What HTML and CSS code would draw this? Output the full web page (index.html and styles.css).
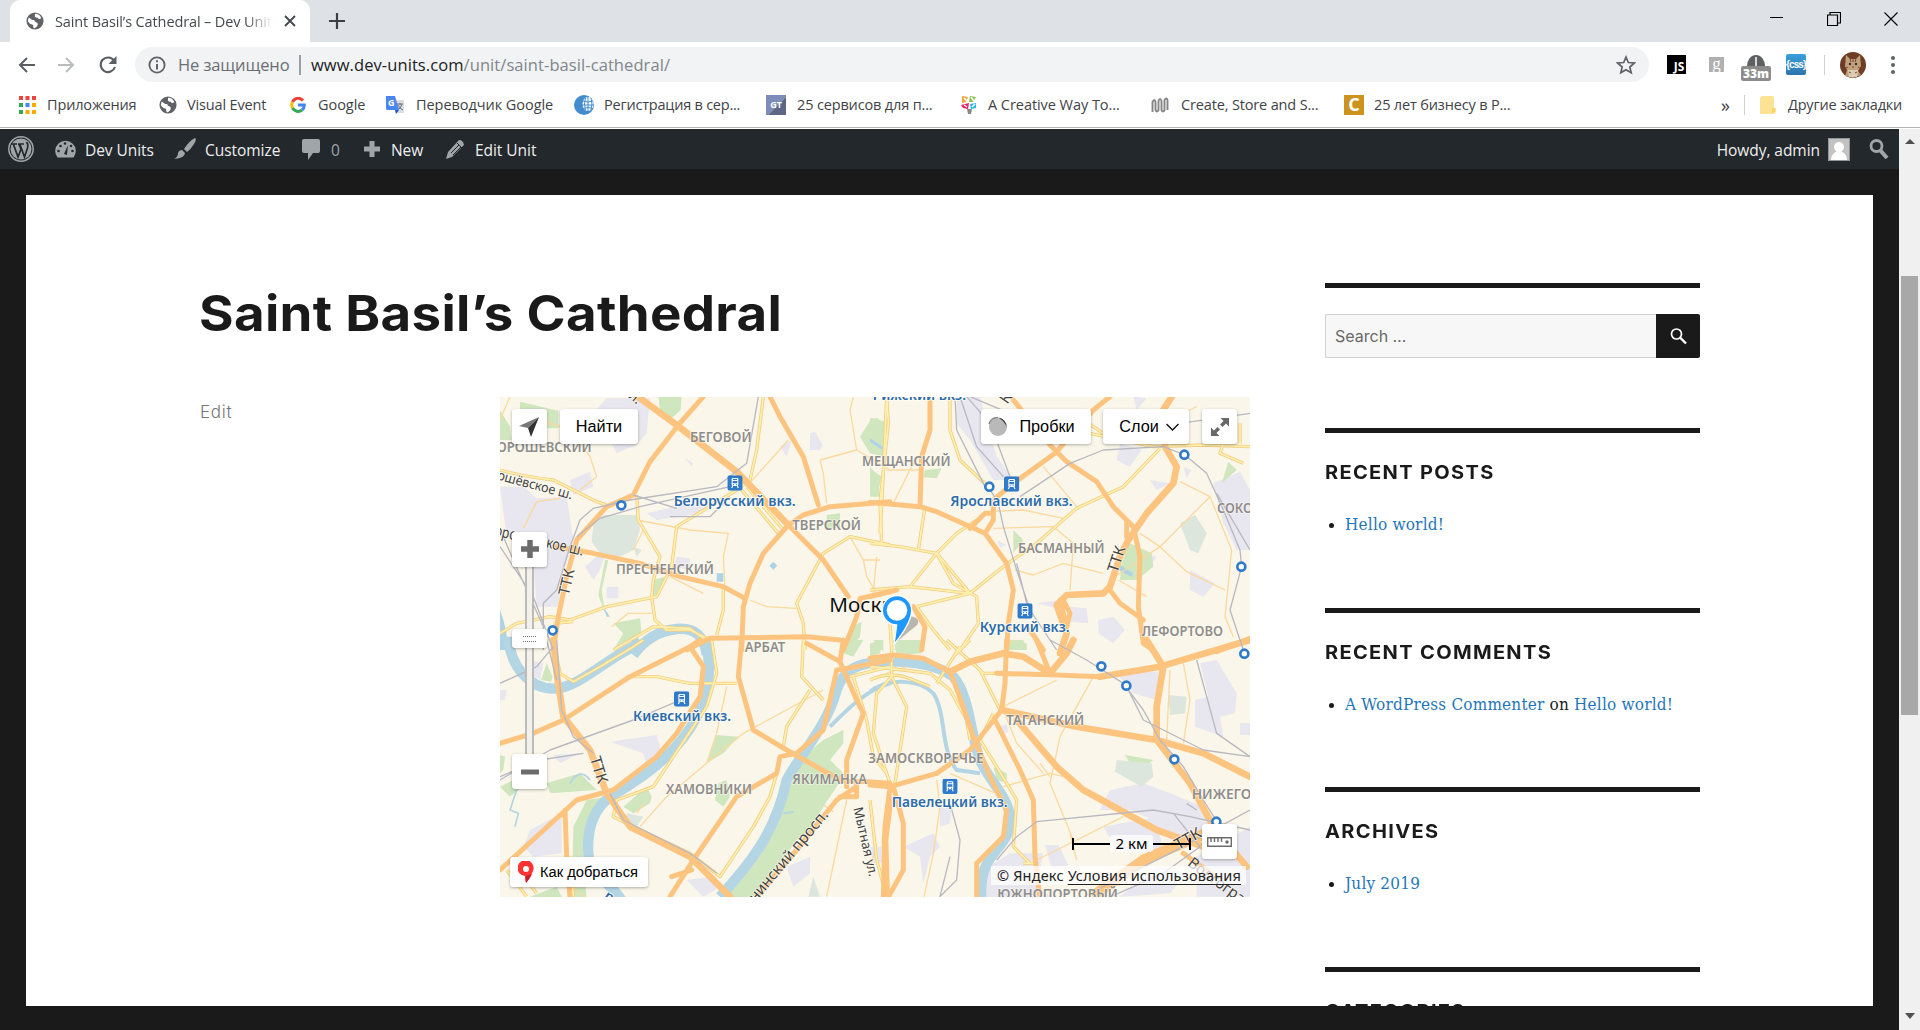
FILE: index.html
```html
<!DOCTYPE html>
<html lang="ru">
<head>
<meta charset="utf-8">
<title>Saint Basil’s Cathedral – Dev Units</title>
<link rel="stylesheet" href="styles.css">
</head>
<body>
<svg class="defs" width="0" height="0">
  <symbol id="globe" viewBox="0 0 20 20"><circle cx="10" cy="10" r="9.5" fill="#5f6368"/><path d="M3 6c2 1 3 3 6 3 1 1 0 2 2 2 2 1 3 3 1 5-1 1-2 2-3 2-2-1 0-3-2-4-2 0-4-2-5-4zM10 2c4 0 6 2 7 5-2 2-4 0-4-1-2 1-4-1-3-2z" fill="#fff"/></symbol>
  <symbol id="station" viewBox="0 0 46 46"><rect width="46" height="46" rx="7" fill="#2f7bc9"/><path d="M13 12q0-4 4-4h12q4 0 4 4v17q0 3-3 3H16q-3 0-3-3z" fill="#fff"/><path d="M17 11h12v3H17zM16 17h14v7H16zM17 27h3v3h-3zM26 27h3v3h-3z" fill="#2f7bc9"/><path d="M16 32l-3 6M30 32l3 6" stroke="#fff" stroke-width="3.500"/></symbol>
  <symbol id="stop" viewBox="0 0 34 34"><circle cx="17" cy="17" r="12" fill="#fff" stroke="#2f7bc9" stroke-width="8"/></symbol>
</svg>

<header class="browser">
  <div class="tabs">
    <div class="tab">
      <svg width="18" height="18"><use href="#globe"/></svg>
      <span class="tab-title">Saint Basil’s Cathedral – Dev Units</span>
      <svg width="12" height="12" viewBox="0 0 12 12"><path d="M1 1l10 10M11 1L1 11" stroke="#45494d" stroke-width="1.9"/></svg>
    </div>
    <svg class="new-tab" width="16" height="16" viewBox="0 0 16 16"><path d="M8 0v16M0 8h16" stroke="#3c4043" stroke-width="2.2"/></svg>
    <div class="window-buttons">
      <svg width="14" height="14" viewBox="0 0 14 14"><path d="M0 5.5h13" stroke="#000"/></svg>
      <svg width="14" height="14" viewBox="0 0 14 14"><path d="M.5 3h10v10.500H.5zM3 3V.5h10.500V11h-3" fill="none" stroke="#000" stroke-width="1.200"/></svg>
      <svg width="14" height="14" viewBox="0 0 14 14"><path d="M.5.5l13 13M13.500.5l-13 13" stroke="#000" stroke-width="1.100"/></svg>
    </div>
  </div>

  <div class="toolbar">
    <svg class="back" width="17" height="16" viewBox="0 0 17 16"><path d="M17 8H2M9 1L2 8l7 7" fill="none" stroke="#5a5e62" stroke-width="2"/></svg>
    <svg class="forward" width="17" height="16" viewBox="0 0 17 16"><path d="M0 8h15M8 1l7 7-7 7" fill="none" stroke="#babcbe" stroke-width="2"/></svg>
    <svg class="reload" width="18" height="18" viewBox="0 0 18 18"><path d="M15 4.500A7.300 7.300 0 1 0 16 11" fill="none" stroke="#5a5e62" stroke-width="2.100"/><path d="M17.500 0v8h-8z" fill="#5a5e62"/></svg>
    <div class="omnibox">
      <svg width="18" height="18" viewBox="0 0 18 18"><circle cx="9" cy="9" r="7.600" fill="none" stroke="#5f6368" stroke-width="1.800"/><path d="M9 4.300v2M9 8v5.500" stroke="#5f6368" stroke-width="2"/></svg>
      <span class="insecure">Не защищено</span>
      <span class="divider"></span>
      <span class="url"><span class="host">www.dev-units.com</span>/unit/saint-basil-cathedral/</span>
      <svg class="star" width="20" height="20" viewBox="0 0 20 20"><path d="M10 2l2.300 5.500 6 .5-4.500 4 1.400 5.800L10 14.700l-5.200 3.100L6.200 12 1.700 8l6-.5z" fill="none" stroke="#5f6368" stroke-width="1.700"/></svg>
    </div>
    <span class="ext js">JS</span>
    <span class="ext goo">g</span>
    <span class="ext timer"><svg width="18" height="12" viewBox="0 0 18 12"><path d="M0 12a9 11 0 0 1 18 0z" fill="#5f6062"/><path d="M9 3v9" stroke="#fff" stroke-width="1.500"/></svg><b>33m</b></span>
    <span class="ext css">{css}</span>
    <span class="bar-line"></span>
    <svg class="cat" width="26" height="26" viewBox="0 0 26 26"><circle cx="13" cy="13" r="13" fill="#6f3c25"/><path d="M6 3l4 4h6l4-4 1 11-3 5 3 4-8 3-8-2 2-6-2-4z" fill="#c3a07c"/><path d="M8 18h10l-1 7H9z" fill="#dccbb6"/><circle cx="10" cy="12" r="1.200" fill="#35312b"/><circle cx="16" cy="12" r="1.200" fill="#35312b"/><path d="M13 6v4M10 7l1 3M16 7l-1 3M12 15h2M8 15l-2 1M18 15l2 1M9 20l2 1M15 21l2-1" stroke="#754b31"/></svg>
    <svg class="dots" width="4" height="18" viewBox="0 0 4 18"><circle cx="2" cy="2" r="2"/><circle cx="2" cy="9" r="2"/><circle cx="2" cy="16" r="2"/></svg>
  </div>

  <nav class="bookmarks">
    <a class="bm apps"><svg width="17" height="18" viewBox="0 0 17 18"><path d="M0 0h4v4H0zM6.500 0h4v4h-4zM13 0h4v4h-4z" fill="#e8453c"/><path d="M0 7h4v4H0z" fill="#34a853"/><path d="M6.500 7h4v4h-4z" fill="#4285f4"/><path d="M13 7h4v4h-4zM6.500 14h4v4h-4zM13 14h4v4h-4z" fill="#f9ab00"/><path d="M0 14h4v4H0z" fill="#34a853"/></svg><span>Приложения</span></a>
    <a class="bm visual"><svg width="18" height="18"><use href="#globe"/></svg><span>Visual Event</span></a>
    <a class="bm google"><svg width="16" height="16" viewBox="0 0 16 16" fill="none" stroke-width="3"><path d="M13 3.500A6.300 6.300 0 0 0 2.500 5" stroke="#ea4335"/><path d="M2.500 5a6.500 6.500 0 0 0 0 6" stroke="#fbbc05"/><path d="M2.500 11a6.300 6.300 0 0 0 9.500 2" stroke="#34a853"/><path d="M12 13q2.500-2 2.300-5H8" stroke="#4285f4"/></svg><span>Google</span></a>
    <a class="bm translate"><svg width="19" height="18" viewBox="0 0 19 18"><path d="M8 4h10v13H10z" fill="#dadce0"/><path d="M11 8h6M14 7v2M16 8q-1 5-5 6M12 9q1 3 5 5" stroke="#647685" fill="none"/><path d="M0 0h9l4 14H1L0 13z" fill="#4a86ee"/><path d="M9 14h4l-3 4z" fill="#2851bd"/><text x="2" y="10" class="g-letter">G</text></svg><span>Переводчик Google</span></a>
    <a class="bm webmoney"><svg width="20" height="20" viewBox="0 0 20 20"><circle cx="10" cy="10" r="10" fill="#438dce"/><ellipse cx="14" cy="9" rx="5.500" ry="7" fill="#fff"/><path d="M9 6q5 2 10 0M8 10h12M9 13.500q5-2 10 0M14 2v14M11.500 3q-2 6 0 12M17 3q2 6 0 12" stroke="#438dce" fill="none"/></svg><span>Регистрация в сер...</span></a>
    <a class="bm services"><i class="gt">GT</i><span>25 сервисов для п...</span></a>
    <a class="bm creative"><svg width="16" height="20" viewBox="0 0 16 20"><path d="M1 1l6 1-2 5-4 1z" fill="#f7a541"/><path d="M9 1l6 1-3 5H8z" fill="#8bc34a"/><path d="M0 10l8-2-1 6-5-1z" fill="#e91e63"/><path d="M9 9l6-1v5l-5 1z" fill="#29b6f6"/><path d="M6 14h5l-1 5H7z" fill="#888"/><path d="M3 3l3 3M10 2l3 4M3 10l3 2M11 12l3-3" stroke="#fff" stroke-width="1.500"/></svg><span>A Creative Way To...</span></a>
    <a class="bm create"><svg width="19" height="16" viewBox="0 0 19 16"><path d="M1.500 15V5q2-4 3 0v8q1.500 3 3 0V4q1.500-4 3 0v9q1.500 3 3 0V3q2-3 3 0v10" fill="none" stroke="#858585" stroke-width="1.900"/></svg><span>Create, Store and S...</span></a>
    <a class="bm business"><i class="c-icon">C</i><span>25 лет бизнесу в Р...</span></a>
    <span class="more">»</span>
    <span class="bar-line"></span>
    <a class="bm other"><svg width="16" height="18" viewBox="0 0 16 18"><path d="M0 2l2-2h11l1 2v10h2v4l-2 2H0z" fill="#fde293"/><path d="M12 17v-4q0-1 3-1v4z" fill="#f5d468"/></svg><span>Другие закладки</span></a>
  </nav>
</header>

<div class="viewport">
  <div class="page">
    <nav class="adminbar">
      <svg class="wp" width="26" height="26" viewBox="0 0 26 26"><circle cx="13" cy="13" r="12.200" fill="none" stroke="#a0a5aa" stroke-width="1.500"/><circle cx="13" cy="13" r="10.500" fill="#a0a5aa"/><path d="M3 8h6M10 8h6M5.500 8.500L10 21l3-8-2-4.500M12 8.500L16.500 21 19.500 12q1-4-1-6" stroke="#23282d" stroke-width="1.700" fill="none"/></svg>
      <a class="ab site"><svg width="21" height="18" viewBox="0 0 21 18"><path d="M2.500 17.500a10.300 10.300 0 1 1 16 0z" fill="#a0a5aa"/><path d="M9 14l4-9-1 10z" fill="#23282d"/><g fill="#23282d"><circle cx="3.500" cy="11" r="1.300"/><circle cx="5.500" cy="6" r="1.300"/><circle cx="10" cy="3.500" r="1.300"/><circle cx="16" cy="6" r="1.300"/><circle cx="17.500" cy="11" r="1.300"/></g></svg><span>Dev Units</span></a>
      <a class="ab customize"><svg width="22" height="22" viewBox="0 0 22 22"><path d="M21 0q2 1-1 6-3 5-7 8l-3-3q5-8 11-11zM8 12l3 3q0 5-11 6 4-2 4-6 1-3 4-3z" fill="#a0a5aa"/></svg><span>Customize</span></a>
      <a class="ab comments"><svg width="18" height="21" viewBox="0 0 18 21"><path d="M2 0h14q2 0 2 2v10q0 2-2 2h-5l-5 7v-7H2q-2 0-2-2V2q0-2 2-2z" fill="#a0a5aa"/></svg><span>0</span></a>
      <a class="ab new"><svg width="18" height="18" viewBox="0 0 18 18"><path d="M9 1v16M1 9h16" stroke="#a0a5aa" stroke-width="5"/></svg><span>New</span></a>
      <a class="ab edit"><svg width="19" height="19" viewBox="0 0 19 19"><path d="M13 0q4 0 5 5L6 17l-6 2 2-7z" fill="#a0a5aa"/><path d="M5 13l8-8M7 15l8-8M11 3l5 5" stroke="#23282d"/></svg><span>Edit Unit</span></a>
      <a class="ab howdy"><span>Howdy, admin</span><svg width="22" height="23" viewBox="0 0 22 23"><path d="M0 0h22v23H0z" fill="#c2c2c2"/><circle cx="11" cy="9" r="5" fill="#fff"/><path d="M3 22q0-6 6-9h4q6 3 6 9z" fill="#fff"/><path d="M.5.5h21v22H.5z" fill="none" stroke="#929599"/></svg></a>
      <svg class="ab-search" width="20" height="20" viewBox="0 0 20 20"><circle cx="7.500" cy="7" r="5.500" fill="none" stroke="#a0a5aa" stroke-width="2.800"/><path d="M11 11l7 8" stroke="#a0a5aa" stroke-width="4"/></svg>
    </nav>

    <main class="paper">
      <section class="entry">
        <h1>Saint Basil’s Cathedral</h1>
        <div class="entry-row">
          <a class="edit-link">Edit</a>
          <div class="map">
            <svg class="map-canvas" width="750" height="500" viewBox="0 0 2250 1500">
              <rect width="2250" height="1500" fill="#faf7ea"/>
              <!-- districts, parks and cemeteries -->
              <g transform="translate(-30 -21)">
                <path class="built" d="M350 25h130l-10 105-30 35-60 25-30-60-50-50zM30 290h70l40 35 90-5 20 130-35 110-10 90h-65l-10-130-30-50-50-30zM285 530l45-40 20-10-20 60-20 30zM240 270l60-25 10 45-60 25zM470 370l170-40v40l-140 20zM350 590h35v35h-35zM960 130l15-5 23 40-8 15h-30zM585 205l25 15-5 10zM870 170l35-20-15 50zM560 500l40 5v35l-50-10z"/>
                <path class="park" d="M90 35l115 27v53h-45l-70-25zM30 60l30 50 5 40H30zM505 20h70l-3 40-27 25-35-25zM1110 140l35-55 45 10-10 95h-40zM1140 235l35 25-15 60-20-10zM1010 375l40-5v40l-40 10zM345 510h10l-20 90 10 70-20-55zM370 700l80-15 5 45-85 50 30-50zM490 570l35-10-20 50-20 10zM1070 780l15-70 30-15-5 45-30 40z"/>
                <path class="grave" d="M340 375h105l5 45-20 60-50 25-50-15-25-35 5-55zM430 470l25 10-15 20z"/>
                <path class="pond" d="M30 660q20 50 25 120H30zM850 515l12 12-12 12-12-12zM680 550h20v25h-20zM340 650l20 30h-10zM1140 145l45 25v12z"/>
              </g>
              <g transform="translate(1110 -21)">
                <path class="built" d="M260 20h70l50 180 50 70h-60l-70-120-40-50zM1030 280l80-35 30 55v180h-40l-40-80zM790 20l40 5-30 35zM600 650l50 5 5 45-55-5zM685 690l45-10 35 40-35 40-45-30zM960 540l75 40-35 40-40-20zM750 160l65 20-35 50-40-20zM840 270l60 10-40 20zM500 640l70-10-10 25zM820 490l40 10-30 40zM940 230l25 10-15 25zM380 450l30 15-20 8z"/>
                <path class="park" d="M0 85h25l20 75v40L0 190zM0 230l25 30 5 60H0zM165 240l50-5-15 30-40-3zM430 420l30 30-30 40zM780 460l65 30 5 40-50 40h-50l5-50zM1075 215l25 25-45 40zM70 780l50-30 40 30zM415 750l55 10v20h-60z"/>
                <path class="grave" d="M930 400l45-25 35 55-25 60-25-10z"/><path class="pond" d="M0 145l45 30v10L0 155zM750 525l40 25-5 10-40-20z"/>
              </g>
              <g transform="translate(-30 729)">
                <path class="built" d="M120 570l95-50v120l-85 10-30-30zM360 305l140-20 15 55-45 40-10-40zM590 720l70-10 30 30-50 30zM890 680l70-30v50l-50 40zM190 345l80-5-60 30zM30 150h20l-5 30H30zM120 60l40 10-10 50-30-20zM1140 620h50v50h-40z"/>
                <path class="park" d="M1060 270l-60 30-60 50-50 110-40 100-150 220 100-10 50-70 70-100 30-10 50-90 40-60 20-40-40-40 40-50zM680 285l65 5-45 50-50 30zM685 430l25-10 10 50-20 30-25-20zM400 500l70-60 15 30-5 20-50 30zM170 70l18 40-5 15-30-5zM290 480l60-10-50 90-20 80 10 140h-45l5-220zM170 430l100-30 50 50-140 10zM30 345l15 5-5 40-10 10zM30 440l40-20 40 10-50 40zM120 770l80-30 20 40zM1070 0h50l-30 50-30-10zM1150 0h30v35z"/>
                <path class="grave" d="M410 520l50 10-20 30-35-15zM970 710l20 60h-35z"/>
              </g>
              <g transform="translate(1110 729)">
                <path class="built" d="M740 100l130-5-10 85-70-20zM990 70l50-10 60 100-5 60-45 10 10 60-85-30v-80l40-10zM820 430l80 30 100 40 20 60-120 40-50-60-70-30-90 0 30-60zM700 560l160-30 20 110-140-10zM100 620l90-40 20 40-30 30-20 80-10-80zM340 690l80-50 100 0-20 100 60 40H350zM210 500h35l-5 50-30 10zM980 650l160-90v210H980zM860 680l90 20-50 60-150 10zM1110 250h30v35h-30zM390 260l20-8 5 25-20 5zM525 615l40 0 30 60-50 10z"/>
                <path class="park" d="M0 10L40 0 30 40 0 50zM70 0h90l-5 40-75 5zM410 0h50l10 25-50 5zM370 380l40 20v30l-30-10zM765 345l85 15-20 15-50-5z"/>
                <path class="grave" d="M740 360l105 10 5 40-35 30-80-45zM895 165l55 5-5 50-45 5z"/>
              </g>
              <!-- river -->
              <g class="river">
                <g transform="translate(-30 -21)"><path d="M430 795Q480 725 560 717T650 795"/></g>
                <g transform="translate(-30 729)"><path d="M55-10C60 80 120 146 190 146S330 70 430 20L450 0M646 0C665 80 660 160 620 230 570 330 480 400 370 465 310 500 290 570 295 640S370 730 400 790"/><path d="M1200 65C1100 65 1060 90 1040 150 1010 260 940 330 890 420 860 560 800 650 690 770"/><path class="creek" d="M1200 130C1130 150 1080 200 1020 260"/><path class="brook" d="M80 450l-20 60 25 10-10 40M240 430q30-50 60-10M880 520l30-5"/></g>
                <g transform="translate(1110 729)"><path d="M0 65C100 60 200 70 250 110 300 170 300 280 330 360 360 430 430 480 420 560 400 640 320 640 335 790"/><path class="creek" d="M0 155C60 110 150 120 190 160 230 220 210 330 260 390L330 400"/></g>
              </g>
              <!-- minor streets -->
              <g class="lane">
                <g transform="translate(-30 -21)"><path d="M440 390l160 30 115 10-15 70 5 90M895 150L770 290M990 210l110-30 100 60M990 210l10 40 10 90M1080 440l40 70 10 50 30 50M540 560l100 50M780 630l50 20 90 5M320 260l-20-60-60-80-120-40M1090 20l-10 40 20 120M270 300l50-40M100 415l40-80 70-10M230 290l80 40M1120 510h50M365 710l50-40 70 0M430 480l30-60M60 20L30 90"/></g>
                <g transform="translate(1110 -21)"><path d="M370 415l180-5 60 50-10 140M360 365l100-5 120 25M520 230l100 120M435 540l55 15 90-35 120 30M930 275l90 45-150 150-150 100M1020 320l65 160-20 200 25 60M870 470l80 75 115 55M745 570l85 50M810 430l60 40M410 770l20-20M20 500l-10 110M50 240h100M1100 100l-30 60M140 200L70 340M900 90l80-40"/></g>
                <g transform="translate(-30 729)"><path d="M1000 150L760 280 650 370 530 470l-80 90M710 140l-30 140-30 90M1070 480l-60 290M440 520l20-30M250 740l30 30M1000 495l30 20"/></g>
                <g transform="translate(1110 729)"><path d="M400 200l160-80M670 110L570 290 540 430l70 170M400 210l40 100 80 90M200 420l10 80-20 140-30 140M240 400l160 70M400 440l140-40 40 10M940 70l20 110-20 130M900 90l-10 210M500 660l260-130M50 100l60-20M510 370l30 40M600 580l20 80M20 610l-20 80"/></g>
              </g>
              <!-- secondary roads: casing, then fill -->
              <g class="roads-casing"><g id="roads">
                <g transform="translate(-30 -21)"><path d="M30 240q70 20 160 30l130 65 30 10M440 315l5 75 65 110-20 70-5 50 10 70 35 30h70l50 25M740 300L560 410l-15 120-45 90-150 30-110 40-60-10-100 20-50 30M820 20l-20 160-20 90-40 30M1190 20l-10 230-10 180M1200 465l-120-25-80 50-80 150 20 60 5 80M700 590v70l-20 75M770 290l110 130M755 300l110 130M190 700l60-5M370 780l120-70 110 5 40 30"/></g>
                <g transform="translate(1110 -21)"><path d="M240 20v100l30 90 85 80M870 175L760 290 620 355 500 460 400 530 300 610 140 650M0 460l90 10 110 20 50 90 70 40 5 80-55 80M350 370l-90 60-60 60-80 100M50 20l5 80-25 240 5 120M165 350l-20 130M660 130l190 40 150-5 140 5M1060 160l-10 30 70 30M140 650l50 70 50 60M0 600l120-10 180 20M200 490l100 120M80 620l-20 80 5 80M640 90l60 40M1110 160v-60"/></g>
                <g transform="translate(-30 729)"><path d="M190 0l20 100 40 25 80-45L430 20 460 0M410 110l90 0 100 20h140M665 0l15 100-30 100-80 120-80 120-110 40-10 50 80 40 150 70 90 70 100-150 50-90 20-70M940 0l-5 110 65 70M960 150l-70 110-10 60M1090 110l40 130 20 110 40 50M1140 480l20 180 30 110M50 690l60 80M80 680l60 80M240 650l10 120M1080 110l120-30"/></g>
                <g transform="translate(1110 729)"><path d="M65 0v110l45 90-20 130-15 100M65 110L20 160 10 280 60 430M0 80l100 10 80 10 60 50 50 90 10 60M230 0l100 90 60 120M270 20l-70 110M370 220l-40 80 50 80 60 100-10 140 50 50M300 60l40 40h60M460 670h40M0 120q65-30 130 0l50 20M250 50L300 0"/></g>
              </g></g>
              <use href="#roads" class="roads-fill"/>
              <!-- main roads -->
              <g class="major">
                <g transform="translate(-30 -21)"><path d="M640 20l-75 85-85 110-50 100-80 35-90 100-30 110-25 120-15 100M840 20l30 60 70 120 45 145M1200 335l-180 15-80 25-45 30-75 85-40 90-20 70-5 130M200 470l110 20 140 30 120 40 130 30 65 35M590 780l70-35 290-5 100 10M1200 605l-90 20-10 55-40 100"/><path d="M895 405l105 105 75 110"/><path class="wide" d="M430 10l130 95 180 140M740 245l155 160"/></g>
                <g transform="translate(1110 -21)"><path d="M180 20v100l-25 80-5 150M0 337l150 13 50 15 145 65 65 90 20 80-15 100-5 80M720 20l-50 40-115 130-125 90-60 50v60l-25 40M300 415l45-45h25M430 30l110 135 50 50 90 60 50 75 60 60 20 90-5 150 15 110 30 20M480 720l40 60M1140 745l-100 40M0 620l80-20M130 650l35 60-10 70M720 600l30 40 70 50M770 390v50M570 630l20 80 10-40-20-40"/><path class="wide" d="M905 20l-25 40 5 110 35 60-10 50-80 90-55 80-25 50-30 90-20 20-110 5-30 30 30 85-20 60"/></g>
                <g transform="translate(-30 729)"><path d="M30 310l100-30 90-40 200-130L600 20l30-20M600 20l40 60-10 90-70 110-60 70-130 100-110 30L30 690M225 510l5 140 10 120M755 0l-10 110 45 160 100 60 160 90 150 10M950 10l100 55 50 115 20 40-50 140v80M1200 60l-100 20-60 10-20 90-20 90-80 70-50 10-10 50-120 70-130 190-70 110M1050 65l10-65M1100 440l-60 40-40 50-80 100-120 140M1050 470h50v-40M545 710l60-20"/><path class="wide" d="M190 0l10 100 20 130 80 100 50 130 70 100 180 90 120 120M1200 480l-15 120 5 170"/></g>
                <g transform="translate(1110 729)"><path d="M0 55l70-10 90 10 80 40 25 65 45 130 50 120 50 100-10 80-80 80v110M410 0l-5 130-10 80-95 120-100 70-140 40-60-5M500 0l40 100M380 100l180 5 130 5M375 240l75 150 40 90 5 170 15 130M60 440L45 560l-5 220M70 440l30 110v140L50 780M940 640l110 80"/><path class="wide" d="M240 95l60-30 100-25 60 10 80 50 50-60 20-40M690 110l180-30L1140 0M830 0l50 80-20 120v100l100 130 70 130 100 120M395 210l45 10 180 40 240 40 140 40 140 70M440 240l120 140 80 70 220 120 140 50"/><path class="motorway" d="M680 760l140-100 210-90"/></g>
              </g>
              <!-- railways -->
              <g class="rail">
                <g transform="translate(-30 -21)"><path d="M805 20l-35 200-90 70-260 40-110 25-40 35-30 80-40 130-40 40v140M720 290l-270 60-120 35-70 55M30 470l100 150 60 160M430 315l130 40M40 440l30 70 90 200M720 320l-60 60-120 0"/></g>
                <g transform="translate(1110 -21)"><path d="M290 20l70 80 60 160M345 290l-85-170-5-100M270 20l50 150 80 90M355 290l30 50 15 70 40 130 40 120 40 60 40 60M450 320l60-40 90-60 100-40 180-10 65 25 65 55 50 110 50 120 5 50-35 130 40 120M1040 310l100 170M930 100l210-30M440 520l30 120M300 20l120 50"/></g>
                <g transform="translate(-30 729)"><path d="M190 20l-50 60L30 130M200 0l15 210 35 80 60 50M30 420l150-90 250-90 130-55M30 410l120-50 130-20M360 460l40 80 200 100 80 60M170 0l30 120"/></g>
                <g transform="translate(1110 729)"><path d="M540 0l110 60 110 70 60 80 50 90 70 80 60 100 50 80M770 140l50 100 180 90 140 20M980 60l60 220 100 70M380 660l60-70 60-45 350-35 110 20 180 40M240 490l30 110-10 120-60 60M910 520l80 100-110 80-180 80M1140 510l-240 130-220 110M240 650l-30 120M950 490l30 20"/></g>
              </g>
              <!-- labels -->
              <g class="labels">
                <g transform="translate(-30 -21)">
                  <g class="district"><text x="600" y="155" textLength="185" lengthAdjust="spacingAndGlyphs">БЕГОВОЙ</text><text x="20" y="186" textLength="285" lengthAdjust="spacingAndGlyphs">ОРОШЕВСКИЙ</text><text x="1116" y="227" textLength="266" lengthAdjust="spacingAndGlyphs">МЕЩАНСКИЙ</text><text x="907" y="421" textLength="206" lengthAdjust="spacingAndGlyphs">ТВЕРСКОЙ</text><text x="378" y="552" textLength="294" lengthAdjust="spacingAndGlyphs">ПРЕСНЕНСКИЙ</text><text x="764" y="786" textLength="122" lengthAdjust="spacingAndGlyphs">АРБАТ</text></g>
                  <text class="rail-name" x="551" y="347" textLength="366" lengthAdjust="spacingAndGlyphs">Белорусский вкз.</text>
                  <text class="street" transform="translate(20 268) rotate(15)" textLength="232" lengthAdjust="spacingAndGlyphs">ошёвское ш.</text>
                  <text class="street big" transform="translate(12 436) rotate(13)" textLength="272" lengthAdjust="spacingAndGlyphs">орошёвское ш.</text>
                  <text class="street big" transform="translate(236 618) rotate(-77)" textLength="80" lengthAdjust="spacingAndGlyphs">ТТК</text>
                  <text class="street" transform="translate(415 22) rotate(40)">л.</text>
                  <text class="city" x="1018" y="665" textLength="226" lengthAdjust="spacingAndGlyphs">Москва</text>
                  <use href="#station" x="712" y="256" width="46" height="46"/><use href="#stop" x="377" y="329" width="34" height="34"/><use href="#stop" x="171" y="704" width="34" height="34"/>
                </g>
                <g transform="translate(1110 -21)">
                  <g class="district"><text x="444" y="488" textLength="260" lengthAdjust="spacingAndGlyphs">БАСМАННЫЙ</text><text x="1041" y="368" textLength="350" lengthAdjust="spacingAndGlyphs">СОКОЛИНАЯ ГОРА</text><text x="815" y="738" textLength="244" lengthAdjust="spacingAndGlyphs">ЛЕФОРТОВО</text></g>
                  <g class="rail-name"><text x="8" y="30" textLength="280" lengthAdjust="spacingAndGlyphs">Рижский вкз.</text><text x="241" y="347" textLength="367" lengthAdjust="spacingAndGlyphs">Ярославский вкз.</text><text x="329" y="726" textLength="270" lengthAdjust="spacingAndGlyphs">Курский вкз.</text></g>
                  <text class="street big" transform="translate(742 550) rotate(-72)" textLength="80" lengthAdjust="spacingAndGlyphs">ТТК</text><text class="street big" transform="translate(412 44) rotate(-55)">К</text>
                  <use href="#station" x="402" y="259" width="46" height="46"/><use href="#station" x="442" y="640" width="46" height="46"/><use href="#stop" x="341" y="273" width="34" height="34"/><use href="#stop" x="926" y="177" width="34" height="34"/><use href="#stop" x="1097" y="513" width="34" height="34"/>
                </g>
                <g transform="translate(-30 729)">
                  <g class="district"><text x="528" y="461" textLength="258" lengthAdjust="spacingAndGlyphs">ХАМОВНИКИ</text><text x="907" y="431" textLength="224" lengthAdjust="spacingAndGlyphs">ЯКИМАНКА</text></g>
                  <text class="rail-name" x="429" y="242" textLength="294" lengthAdjust="spacingAndGlyphs">Киевский вкз.</text>
                  <text class="street big" transform="translate(300 355) rotate(73)" textLength="82" lengthAdjust="spacingAndGlyphs">ТТК</text>
                  <text class="street big" transform="translate(760 832) rotate(-50)" textLength="400" lengthAdjust="spacingAndGlyphs">Ленинский просп.</text>
                  <text class="street" transform="translate(1090 505) rotate(77)" textLength="212" lengthAdjust="spacingAndGlyphs">Мытная ул.</text>
                  <text class="rail-name" transform="translate(340 773) rotate(35)">река</text>
                  <use href="#station" x="552" y="154" width="46" height="46"/>
                </g>
                <g transform="translate(1110 729)">
                  <g class="district"><text x="-5" y="368" textLength="346" lengthAdjust="spacingAndGlyphs">ЗАМОСКВОРЕЧЬЕ</text><text x="409" y="256" textLength="234" lengthAdjust="spacingAndGlyphs">ТАГАНСКИЙ</text><text x="965" y="477" textLength="385" lengthAdjust="spacingAndGlyphs">НИЖЕГОРОДСКИЙ</text><text x="382" y="776" textLength="362" lengthAdjust="spacingAndGlyphs">ЮЖНОПОРТОВЫЙ</text></g>
                  <text class="rail-name" x="65" y="501" textLength="348" lengthAdjust="spacingAndGlyphs">Павелецкий вкз.</text>
                  <text class="street big" transform="translate(925 630) rotate(-30)" textLength="84" lengthAdjust="spacingAndGlyphs">ТТК</text>
                  <text class="street big" transform="translate(950 675) rotate(36)" textLength="330" lengthAdjust="spacingAndGlyphs">Волгоградский</text>
                  <use href="#station" x="217" y="416" width="46" height="46"/><use href="#stop" x="677" y="62" width="34" height="34"/><use href="#stop" x="752" y="120" width="34" height="34"/><use href="#stop" x="896" y="341" width="34" height="34"/><use href="#stop" x="1106" y="24" width="34" height="34"/><use href="#stop" x="1022" y="528" width="34" height="34"/>
                </g>
              </g>
              <!-- placemark -->
              <g transform="translate(1110 -21)"><path d="M72 762l70-58q10-20-20-25z" fill="#555" opacity=".4"/><path d="M72 764l8-59a44 44 0 1 1 45-42q-1 35-53 101z" fill="#1e98ff" stroke="#fff" stroke-width="4"/><circle cx="81" cy="661" r="31" fill="#fff"/></g>
            </svg>

            <button class="ctl locate"><svg width="20" height="20" viewBox="0 0 20 20"><path d="M20 0L0 9l9 2z" fill="#777"/><path d="M20 0l-8 20-3-9z" fill="#333"/></svg></button>
            <button class="ctl find">Найти</button>
            <button class="ctl traffic"><svg width="20" height="20" viewBox="0 0 20 20"><circle cx="10" cy="10" r="9" fill="#b9b9b9"/><path d="M1 7a9.500 9.500 0 0 1 9-6.500" fill="none" stroke="#888" stroke-width="1.500"/><path d="M10 .5a9.500 9.500 0 0 1 8.500 10q-1-6-8.500-10" fill="#222"/></svg>Пробки</button>
            <button class="ctl layers">Слои<svg width="13" height="8" viewBox="0 0 13 8"><path d="M.5 1l6 6 6-6" fill="none" stroke="#111" stroke-width="1.400"/></svg></button>
            <button class="ctl full"><svg width="20" height="20" viewBox="0 0 20 20" fill="#686868"><path d="M10.500 1H19v8.500l-3-3-3.500 3.500-2.500-2.500L13.500 4zM1 10.500V19h8.500l-3-3L10 12.500 7.500 10 4 13.500z"/></svg></button>
            <div class="zoom-track"></div>
            <button class="ctl plus"><svg width="18" height="18" viewBox="0 0 18 18"><path d="M9 0v18M0 9h18" stroke="#6c6c6c" stroke-width="5.500"/></svg></button>
            <div class="ctl zoom-thumb"><i></i></div>
            <button class="ctl minus"><svg width="18" height="6" viewBox="0 0 18 6"><path d="M0 3h18" stroke="#6c6c6c" stroke-width="5"/></svg></button>
            <button class="ctl route"><svg width="16" height="22" viewBox="0 0 16 22"><path d="M8 22L7 15A8 8 0 1 1 15 10q-2 6-7 12z" fill="#f33"/><path d="M8 22q-1-5 0-7l6-2q-3 6-6 9z" fill="#c91e28"/><circle cx="8" cy="8" r="3" fill="#fff"/></svg>Как добраться</button>
            <div class="scale"><i></i><span>2 км</span><i></i></div>
            <button class="ctl ruler"><svg width="25" height="10" viewBox="0 0 25 10"><path d="M.7.7h23.600v8.600H.7zM4 1v4M7.500 1v4M11 1v4M14.500 1v4" fill="none" stroke="#6c6c6c" stroke-width="1.400"/><circle cx="20" cy="5" r="1.700" fill="#6c6c6c"/></svg></button>
            <div class="copyright">© Яндекс <a>Условия использования</a></div>
          </div>
        </div>
      </section>

      <aside class="sidebar">
        <section class="widget search-widget">
          <div class="search"><span class="search-input">Search …</span><button class="search-btn"><svg width="17" height="17" viewBox="0 0 17 17"><circle cx="6.500" cy="6" r="5" fill="none" stroke="#fff" stroke-width="1.700"/><path d="M10 9.500l6 6" stroke="#fff" stroke-width="2.400"/></svg></button></div>
        </section>
        <section class="widget"><h2>Recent Posts</h2><ul><li><a>Hello world!</a></li></ul></section>
        <section class="widget"><h2>Recent Comments</h2><ul><li><a>A WordPress Commenter</a> on <a>Hello world!</a></li></ul></section>
        <section class="widget"><h2>Archives</h2><ul><li><a>July 2019</a></li></ul></section>
        <section class="widget"><h2>Categories</h2></section>
      </aside>
    </main>
  </div>
  <div class="scrollbar"><i class="up"></i><span class="thumb"></span><i class="down"></i></div>
</div>
</body>
</html>
```

FILE: styles.css
```css
* { box-sizing: border-box; }
body { margin: 0; width: 1920px; height: 1030px; overflow: hidden; background: #1a1a1a; font-family: "Open Sans", "Noto Sans", sans-serif; }
svg { display: block; flex: none; }
i { font-style: normal; }
.defs { position: absolute; }
button { padding: 0; border: 0; font: inherit; }

/* browser window */
.browser { height: 129px; background: #fff; box-shadow: inset 0 -1px 0 #fff, inset 0 -2px 0 #b3b6b9; overflow: hidden; }
.tabs { display: flex; align-items: flex-start; height: 42px; background: #dee1e6; }
.tab { display: flex; align-items: center; width: 300px; height: 42px; margin-left: 10px; padding: 0 14px 0 16px; background: #fff; border-radius: 10px 10px 0 0; }
.tab-title { width: 218px; margin: 0 12px 0 11px; overflow: hidden; white-space: nowrap; font-size: 14.5px; letter-spacing: -.12px; color: #45484c; -webkit-mask-image: linear-gradient(90deg, #000 88%, transparent); mask-image: linear-gradient(90deg, #000 88%, transparent); }
.new-tab { margin: 13px 0 0 19px; }
.window-buttons { display: flex; gap: 43px; margin: 12px 22px 0 auto; }
.toolbar { display: flex; align-items: center; height: 45px; }
.back { margin-left: 18px; }
.forward { margin-left: 23px; }
.reload { margin-left: 24px; }
.omnibox { display: flex; align-items: center; width: 1514px; height: 35px; margin-left: 18px; padding: 0 13px; border-radius: 18px; background: #f1f3f4; color: #80868b; font-size: 16.500px; white-space: nowrap; }
.insecure { width: 112px; margin-left: 12px; color: #6a6e73; letter-spacing: -.1px; }
.divider { width: 2px; height: 20px; margin: 0 10px 0 9px; background: #9aa0a6; }
.url { letter-spacing: .08px; }
.host { color: #202124; }
.star { margin-left: auto; }
.ext { display: flex; justify-content: center; align-items: flex-end; color: #fff; font-weight: 700; }
.js { width: 19px; height: 19px; margin-left: 18px; padding-left: 5px; background: #000; font-size: 12px; line-height: 14px; }
.goo { width: 15px; height: 15px; margin-left: 23px; background: #b0b0b0; font: 400 17px/17px "Liberation Serif", serif; }
.timer { flex-direction: column; align-items: center; width: 30px; height: 27px; margin: 5px 0 0 17px; }
.timer b { width: 30px; height: 15px; border-radius: 2px; background: #8c8c8c; text-align: center; font-size: 12px; line-height: 15px; }
.css { align-items: center; width: 20px; height: 21px; margin-left: 15px; border-radius: 2px; background: linear-gradient(#3ba0dc, #2b74ae); font: 700 10px "Liberation Sans", sans-serif; letter-spacing: -.9px; }
.bar-line { width: 1px; height: 20px; background: #d0d3d6; }
.toolbar .bar-line { margin-left: 18px; }
.cat { margin-left: 15px; }
.dots { margin-left: 25px; fill: #5f6368; }

.bookmarks { display: flex; align-items: center; height: 36px; padding-left: 19px; color: #3f4347; font-size: 14.500px; white-space: nowrap; }
.bm { display: flex; align-items: center; gap: 11px; letter-spacing: -.15px; }
.apps { width: 140px; }
.visual { width: 131px; gap: 10px; letter-spacing: -.15px; }
.google { width: 96px; gap: 12px; letter-spacing: -.05px; }
.translate { width: 188px; letter-spacing: -.05px; }
.webmoney { width: 192px; gap: 10px; letter-spacing: -.22px; }
.services { width: 195px; }
.creative { width: 190px; letter-spacing: -.05px; }
.create { width: 193px; }
.business { width: 377px; gap: 10px; letter-spacing: -.16px; }
.bm span { padding-bottom: 1px; }
.g-letter { font: 700 9px "Open Sans", sans-serif; fill: #fff; }
.gt, .c-icon { width: 20px; height: 20px; color: #fff; text-align: center; font-weight: 700; }
.gt { background: linear-gradient(135deg, #7d8db8 55%, #5d6685 56%); font-size: 9px; line-height: 20px; letter-spacing: 0; }
.c-icon { background: #cc931f; font-size: 18px; line-height: 19px; letter-spacing: 0; }
.more { width: 23px; font-size: 18px; }
.other { margin-left: 15px; gap: 12px; letter-spacing: -.22px; }

/* admin bar */
.viewport { display: flex; height: 901px; }
.page { display: flex; flex-direction: column; width: 1899px; background: #1a1a1a; }
.adminbar { display: flex; align-items: center; height: 40px; padding-left: 8px; background: #23282d; color: #eee; font-size: 15.500px; white-space: nowrap; }
.ab { display: flex; align-items: center; gap: 9px; letter-spacing: -.05px; }
.ab span { padding-top: 2px; }
.site { width: 119px; margin-left: 21px; }
.customize { width: 128px; }
.comments { width: 61px; gap: 11px; color: #9ca1a6; }
.new { width: 83px; gap: 10px; }
.edit { gap: 10px; }
.howdy { margin-left: auto; gap: 8px; }
.ab-search { margin: 0 10px 0 19px; }

/* page body */
.paper { display: flex; width: 1847px; height: 811px; margin: 26px 0 0 26px; padding-left: 174px; background: #fff; overflow: hidden; }
.entry { width: 1125px; padding-top: 87px; }
h1 { width: max-content; margin: 0 0 0 -1px; height: 64px; font: 700 49px/64px Inter, sans-serif; letter-spacing: .3px; color: #1a1a1a; white-space: nowrap; transform: scaleX(1.078); transform-origin: 0 50%; }
.entry-row { display: flex; margin-top: 51px; }
.edit-link { width: 300px; padding-top: 3px; color: #757575; font: 300 17px/24px Inter, sans-serif; letter-spacing: .7px; }

/* map */
.map { position: relative; width: 750px; height: 500px; overflow: hidden; font-family: "Liberation Sans", sans-serif; }
.map-canvas path { stroke-linejoin: round; }
.built { fill: #e8e6ee; }
.park { fill: #cfe6bf; }
.grave { fill: #dce6dd; }
.pond { fill: #aed3e6; }
.river path { fill: none; stroke: #b3d5e4; stroke-width: 31; }
.river .creek { stroke-width: 12; }
.river .brook { stroke-width: 5; }
.lane path { fill: none; stroke: #fbd99f; stroke-width: 4; }
#roads path { fill: none; }
.roads-casing { stroke: #f3cd80; stroke-width: 10; }
.roads-fill { stroke: #fff0b0; stroke-width: 5; }
.major path { fill: none; stroke: #fdc480; stroke-width: 15; stroke-linecap: round; }
.major .wide { stroke-width: 20; }
.major .motorway { stroke-width: 32; }
.rail path { fill: none; stroke: #b9b8c0; stroke-width: 4; }
.labels text { font-family: "Noto Sans", sans-serif; paint-order: stroke; stroke: #fffdf5; stroke-width: 5px; stroke-linejoin: round; }
.labels .district text { font-size: 41px; font-weight: 600; fill: #8f8d8c; stroke-opacity: .6; }
.labels .rail-name, .labels .rail-name text { font-size: 41px; font-weight: 600; fill: #2d6cac; }
.labels .street { font-size: 40px; fill: #444; stroke-opacity: .7; }
.labels .big { font-size: 46px; }
.labels .city { font-size: 60px; fill: #111; }

.ctl { position: absolute; display: flex; align-items: center; justify-content: center; height: 35px; background: #fff; border-radius: 3px; box-shadow: 0 1px 3px rgba(0, 0, 0, .3); font-size: 16.250px; color: #000; white-space: nowrap; }
.locate { left: 12px; top: 12px; width: 35px; padding-right: 2px; }
.find { left: 60px; top: 12px; width: 78px; }
.traffic { left: 481px; top: 12px; width: 110px; gap: 11px; padding-right: 9px; }
.layers { left: 603px; top: 12px; width: 86px; gap: 7px; padding-left: 6px; }
.full { left: 702px; top: 12px; width: 35px; }
.plus { left: 12px; top: 135px; width: 35px; padding-bottom: 2px; }
.minus { left: 12px; top: 357px; width: 35px; }
.zoom-track { position: absolute; left: 25px; top: 165px; width: 9px; height: 200px; border: 2px solid #bbb; background: #f3f1ea; }
.zoom-thumb { left: 12px; top: 232px; width: 35px; height: 19px; }
.zoom-thumb i { width: 13px; height: 6px; border: dotted #777; border-width: 1px 0; }
.route { left: 10px; top: 460px; width: 138px; height: 30px; gap: 6px; padding-right: 2px; font-size: 14.700px; }
.scale { position: absolute; left: 572px; top: 438px; display: flex; align-items: center; width: 119px; height: 17px; }
.scale span { width: 43px; border-radius: 3px; background: rgba(255, 255, 255, .75); text-align: center; font: 15px/17px "Noto Sans", sans-serif; }
.scale i { width: 38px; height: 12px; background: linear-gradient(#000, #000) 0 50% / 100% 2px no-repeat; border-left: 2px solid #000; }
.scale i:last-child { border-left: 0; border-right: 2px solid #000; }
.ruler { left: 702px; top: 427px; width: 35px; }
.copyright { position: absolute; left: 491px; top: 469px; width: 255px; height: 19px; padding-left: 6px; background: rgba(255, 255, 255, .72); font: 14.500px/19px "Noto Sans", sans-serif; letter-spacing: .17px; white-space: nowrap; color: #222; }
.copyright a { text-decoration: underline; text-underline-offset: 3px; }

/* sidebar */
.sidebar { width: 375px; padding-top: 88px; }
.widget { height: 179.500px; padding-top: 33px; border-top: 5px solid #1a1a1a; }
.search-widget { height: 145px; padding-top: 26px; }
.search { display: flex; height: 44px; }
.search-input { width: 331px; padding-left: 9px; border: 1px solid #d1d1d1; border-right: 0; border-radius: 2px 0 0 2px; background: #f7f7f7; color: #686868; font: 400 16px/42px Inter, sans-serif; }
.search-btn { display: flex; align-items: center; justify-content: center; width: 44px; background: #1a1a1a; border-radius: 0 2px 2px 0; }
h2 { width: max-content; margin: 0 0 28px; font: 700 19px/14px Inter, sans-serif; letter-spacing: 1.250px; color: #1a1a1a; text-transform: uppercase; white-space: nowrap; transform: scaleX(1.055); transform-origin: 0 50%; }
ul { margin: 0; padding-left: 20px; color: #1a1a1a; font: 17px/32px "DejaVu Serif", serif; font-stretch: condensed; letter-spacing: .2px; white-space: nowrap; }
li::marker { font-size: 15px; }
li a { color: #1f76b8; }

.scrollbar { display: flex; flex-direction: column; align-items: center; width: 21px; background: #f0f0f0; }
.up, .down { width: 0; height: 0; border: 5px solid transparent; }
.up { margin-top: 5px; border-bottom-color: #505050; }
.down { margin-top: 298px; border-top: 6px solid #505050; }
.thumb { width: 17px; height: 439px; margin-top: 132px; background: #a8a8a8; }
```
